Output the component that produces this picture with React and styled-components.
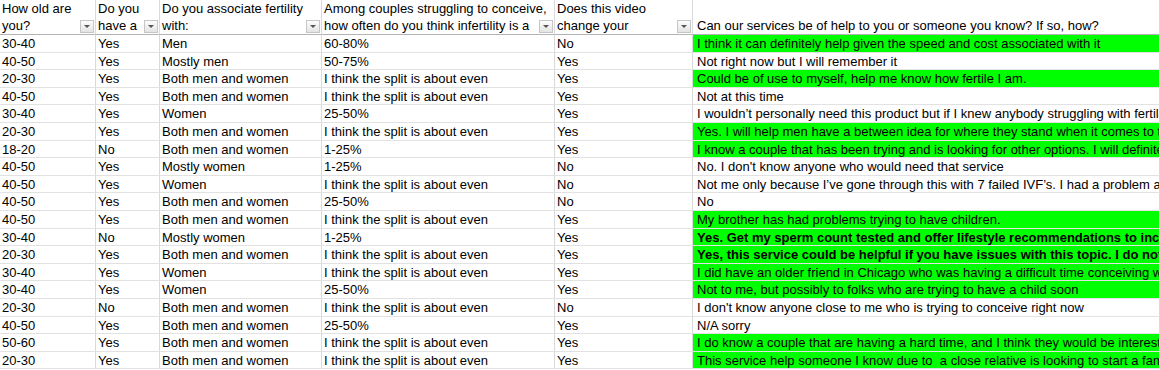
import React from 'react';
import styled, { createGlobalStyle } from 'styled-components';

const GlobalStyle = createGlobalStyle`
  html, body {
    margin: 0;
    padding: 0;
    background: #ffffff;
  }
  body {
    font-family: 'Liberation Sans', Arial, sans-serif;
    color: #000000;
  }
`;

const Sheet = styled.div`
  width: 1160px;
  height: 370px;
  overflow: hidden;
  background: #ffffff;
  display: grid;
  grid-template-columns: 96px 64px 162px 233px 138px 1fr;
  grid-template-rows: 35px;
  grid-auto-rows: 17.6px;
  font-size: 13px;
`;

const HeadCell = styled.div`
  position: relative;
  box-sizing: border-box;
  min-width: 0;
  border-right: 1px solid #dadada;
  border-bottom: 1px solid #b4b4b4;
  overflow: hidden;
`;

const HeadText = styled.div`
  height: 34px;
  overflow: hidden;
  display: flex;
  flex-direction: column;
  justify-content: flex-end;
  padding: 0 ${(props) => (props.$wide ? '4px' : '2px')};
  line-height: 17px;
`;

const FilterButton = styled.span`
  position: absolute;
  right: 1px;
  bottom: 1px;
  width: 14px;
  height: 13px;
  box-sizing: border-box;
  border: 1px solid #c6c6c6;
  background: linear-gradient(#fdfdfd, #e4e4e4);
  display: flex;
  align-items: center;
  justify-content: center;

  &::after {
    content: '';
    border-left: 3px solid transparent;
    border-right: 3px solid transparent;
    border-top: 3px solid #555555;
  }
`;

const Cell = styled.div`
  box-sizing: border-box;
  min-width: 0;
  padding: 0 ${(props) => (props.$wide ? '4px' : '2px')};
  line-height: 17.6px;
  white-space: nowrap;
  overflow: hidden;
  border-right: 1px solid #dadada;
  border-bottom: 1px solid #e2e2e2;
  background: ${(props) => (props.$green ? '#00ff00' : '#ffffff')};
  font-weight: ${(props) => (props.$bold ? 700 : 400)};
`;

const columns = [
  { title: 'How old are you?', filter: true },
  { title: 'Do you have a', filter: true },
  { title: 'Do you associate fertility with:', filter: true },
  { title: 'Among couples struggling to conceive, how often do you think infertility is a', filter: true },
  { title: 'Does this video change your', filter: true },
  { title: 'Can our services be of help to you or someone you know? If so, how?', filter: false },
];

const EVEN = 'I think the split is about even';
const BOTH = 'Both men and women';

const rows = [
  ['30-40', 'Yes', 'Men', '60-80%', 'No', 'I think it can definitely help given the speed and cost associated with it', 'g'],
  ['40-50', 'Yes', 'Mostly men', '50-75%', 'Yes', 'Not right now but I will remember it', ''],
  ['20-30', 'Yes', BOTH, EVEN, 'Yes', 'Could be of use to myself, help me know how fertile I am.', 'g'],
  ['40-50', 'Yes', BOTH, EVEN, 'Yes', 'Not at this time', ''],
  ['30-40', 'Yes', 'Women', '25-50%', 'Yes', 'I wouldn\u2019t personally need this product but if I knew anybody struggling with fertility I would recommend it', ''],
  ['20-30', 'Yes', BOTH, EVEN, 'Yes', 'Yes. I will help men have a between idea for where they stand when it comes to their fertility', 'g'],
  ['18-20', 'No', BOTH, '1-25%', 'Yes', 'I know a couple that has been trying and is looking for other options. I will definitely tell them about it', 'g'],
  ['40-50', 'Yes', 'Mostly women', '1-25%', 'No', 'No. I don\'t know anyone who would need that service', ''],
  ['40-50', 'Yes', 'Women', EVEN, 'No', 'Not me only because I\u2019ve gone through this with 7 failed IVF\u2019s. I had a problem and it was me', ''],
  ['40-50', 'Yes', BOTH, '25-50%', 'No', 'No', ''],
  ['40-50', 'Yes', BOTH, EVEN, 'Yes', 'My brother has had problems trying to have children.', 'g'],
  ['30-40', 'No', 'Mostly women', '1-25%', 'Yes', 'Yes. Get my sperm count tested and offer lifestyle recommendations to increase it', 'gb'],
  ['20-30', 'Yes', BOTH, EVEN, 'Yes', 'Yes, this service could be helpful if you have issues with this topic. I do not currently', 'gb'],
  ['30-40', 'Yes', 'Women', EVEN, 'Yes', 'I did have an older friend in Chicago who was having a difficult time conceiving with her husband', 'g'],
  ['30-40', 'Yes', 'Women', '25-50%', 'Yes', 'Not to me, but possibly to folks who are trying to have a child soon', 'g'],
  ['20-30', 'No', BOTH, EVEN, 'No', 'I don\'t know anyone close to me who is trying to conceive right now', ''],
  ['40-50', 'Yes', BOTH, '25-50%', 'Yes', 'N/A sorry', ''],
  ['50-60', 'Yes', BOTH, EVEN, 'Yes', 'I do know a couple that are having a hard time, and I think they would be interested', 'g'],
  ['20-30', 'Yes', BOTH, EVEN, 'Yes', 'This service help someone I know due to \u00a0a close relative is looking to start a family', 'g'],
];

const App = () => (
  <>
    <GlobalStyle />
    <Sheet>
      {columns.map((col, i) => (
        <HeadCell key={col.title}>
          <HeadText $wide={i === 5}>{col.title}</HeadText>
          {col.filter && <FilterButton />}
        </HeadCell>
      ))}
      {rows.map((r, ri) => (
        <React.Fragment key={ri}>
          {r.slice(0, 5).map((v, ci) => (
            <Cell key={ci}>{v}</Cell>
          ))}
          <Cell $wide $green={r[6].includes('g')} $bold={r[6].includes('b')}>
            {r[5]}
          </Cell>
        </React.Fragment>
      ))}
    </Sheet>
  </>
);

export default App;
